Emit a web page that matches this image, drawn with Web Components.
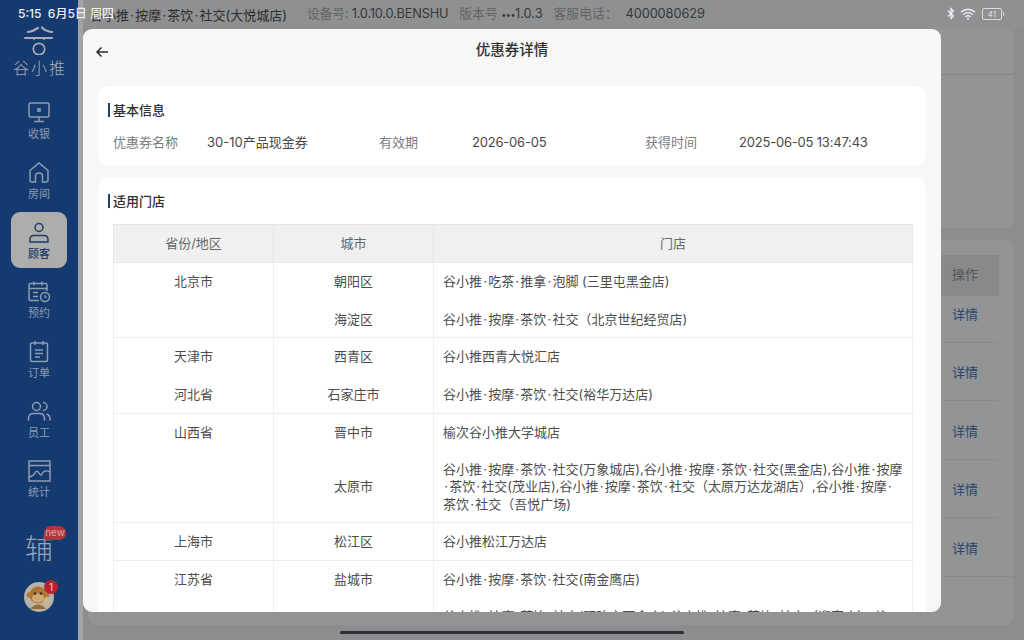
<!DOCTYPE html>
<html lang="zh-CN"><head><meta charset="utf-8"><title>优惠券详情</title>
<style>
html,body{margin:0;height:640px;overflow:hidden;background:#8c8d8f;font-family:"Inter","Noto Sans CJK SC",sans-serif;}
</style></head><body>
<app-shell>
  <app-sidebar slot="side">
    <nav-item label="收银" icon="cash"></nav-item>
    <nav-item label="房间" icon="home"></nav-item>
    <nav-item label="顾客" icon="user" active></nav-item>
    <nav-item label="预约" icon="cal"></nav-item>
    <nav-item label="订单" icon="order"></nav-item>
    <nav-item label="员工" icon="staff"></nav-item>
    <nav-item label="统计" icon="chart"></nav-item>
  </app-sidebar>
  <app-topbar slot="top"></app-topbar>
  <back-page slot="page"></back-page>
  <coupon-modal slot="modal"></coupon-modal>
  <status-bar slot="status"></status-bar>
</app-shell>
<script>
const CJK='"Inter","Noto Sans CJK SC",sans-serif';
const dots=s=>s.replace(/·/g,'<i class="d">·</i>');
const DOT='.d{font-style:normal;margin:0 1.2px}';
function def(name,html){
  customElements.define(name,class extends HTMLElement{
    constructor(){super();this.attachShadow({mode:'open'});}
    connectedCallback(){this.shadowRoot.innerHTML=typeof html==='function'?html(this):html;}
  });
}
def('app-shell',`<style>
:host{display:block;position:relative;width:1024px;height:640px;overflow:hidden;font-family:${CJK}}
.wrap{display:flex;height:640px}
.main{flex:1;min-width:0;display:flex;flex-direction:column;background:#8c8d8f;border-left:5px solid #a2a3a4}
.modal{position:absolute;left:83px;top:29px}
.status{position:absolute;left:0;top:0;right:0}
.pill{position:absolute;left:340px;top:630.5px;width:344px;height:3.5px;border-radius:2px;background:#2e2f33}
</style>
<div class="wrap"><slot name="side"></slot><div class="main"><slot name="top"></slot><slot name="page"></slot></div></div>
<div class="modal"><slot name="modal"></slot></div>
<div class="status"><slot name="status"></slot></div>
<div class="pill"></div>`);

def('app-sidebar',`<style>
:host{display:flex;flex-direction:column;flex:none;width:78px;height:640px;background:#143a6f;box-sizing:border-box;align-items:center;color:#8e9cb2}
.logo{height:91px;flex:none;display:flex;flex-direction:column;align-items:center;justify-content:flex-start;padding-top:25px;box-sizing:border-box}
.logo svg{display:block}
.logo span{font:300 16px/16px "Noto Sans CJK SC",sans-serif;letter-spacing:2px;margin-right:-2px;color:#a8adb5;margin-top:4px}
.nav{display:flex;flex-direction:column;align-self:stretch}
.promo{position:relative;margin-top:17px;height:42px;width:28px;display:flex;align-items:center;justify-content:center;font:300 28px/30px "Noto Sans CJK SC",sans-serif;color:#9aa4b3}
.new{position:absolute;left:19px;top:0;width:22px;height:14px;border-radius:7px 7px 7px 2px;background:#b4343c;color:#d8a7aa;font:10px/13px "Inter",sans-serif;text-align:center}
.ava{position:relative;margin-top:14px;width:30px;height:30px}
.badge{position:absolute;left:20px;top:-2px;width:14px;height:14px;border-radius:50%;background:#b0252d;color:#e9d6d6;font:10px/14px "Inter",sans-serif;text-align:center}
</style>
<div class="logo">
<svg width="36" height="30" viewBox="0 0 36 30" fill="none" stroke="#a8adb5" stroke-width="2.200" stroke-linecap="round"><path d="M7 7q5-.5 10-4M21 2.500q4 4 10 4.500M4 13h27"/><path d="M13 13.500v1M23 13.500v1" stroke-width="1.500"/><circle cx="18" cy="24" r="5.700" stroke-width="1.700"/></svg>
<span>谷小推</span></div>
<div class="nav"><slot></slot></div>
<div class="promo">辅<div class="new">new</div></div>
<div class="ava"><svg width="30" height="30" viewBox="0 0 30 30"><circle cx="15" cy="15" r="15" fill="#b5b2a9"/><circle cx="14" cy="13" r="8.500" fill="#b07434"/><circle cx="5.500" cy="13" r="2.800" fill="#b07434"/><circle cx="22.500" cy="13" r="2.800" fill="#b07434"/><ellipse cx="14" cy="16" rx="6" ry="4.500" fill="#cfa873"/><circle cx="11" cy="11.500" r="1.200" fill="#3a2a1c"/><circle cx="17" cy="11.500" r="1.200" fill="#3a2a1c"/><path d="M6 27q8-9 16 0" fill="#9a6c34"/><path d="M23 14l3 9-4 3-3-8z" fill="#c9b58f"/></svg><div class="badge">1</div></div>`);

const ICONS={
cash:`<rect x="3" y="3" width="20" height="14" rx="1.500"/><path d="M13 17v4M8 21.500h10"/><path d="M13 8v4M11 9h4M11 11h4" stroke-width="1.300"/>`,
home:`<path d="M4 10.500 13 3l9 7.500V20a2 2 0 0 1-2 2h-3.500v-6q0-3-3.500-3t-3.500 3v6H6a2 2 0 0 1-2-2z"/>`,
user:`<circle cx="13" cy="7.500" r="4"/><path d="M4 22v-2.500q0-4 4-4h10q4 0 4 4V22z"/>`,
cal:`<path d="M21 12V6a1.500 1.500 0 0 0-1.500-1.500h-15A1.500 1.500 0 0 0 3 6v14a1.500 1.500 0 0 0 1.500 1.500H13"/><path d="M8 2.500v4M16 2.500v4M3 9.500h18M7 13.500h5M7 17.500h5"/><circle cx="19" cy="18" r="4.500"/><path d="M19 16v2.200h1.800" stroke-width="1.200"/>`,
order:`<rect x="4.500" y="4" width="17" height="18.500" rx="1.500"/><path d="M9 2v4M17 2v4M9 11h8M9 14.500h8M9 18h5"/>`,
staff:`<circle cx="10.500" cy="7.500" r="4"/><path d="M2.500 21.500v-2q0-5 5-5h6q5 0 5 5v2"/><path d="M17 3.500a4 4 0 0 1 0 8M20.500 15q3.500 1 3.500 5v1.500"/>`,
chart:`<rect x="3" y="3" width="21" height="20"/><path d="M3 7.500h21M3 19q4-.5 6-4t4 0 3 1 3-3 5 1"/>`
};
def('nav-item',el=>`<style>
:host{display:flex;height:59.7px;align-items:center;justify-content:center}
.b{width:56px;height:56px;border-radius:9px;display:flex;flex-direction:column;align-items:center;justify-content:center;color:#8e9cb2;box-sizing:border-box;padding-bottom:1px}
.b.on{background:#adaeac;color:#1c3a6c}
svg{display:block;fill:none;stroke:currentColor;stroke-width:1.500}
.t{font:11px/14px "Noto Sans CJK SC",sans-serif;margin-top:1px}
.on .t{font-weight:500}
</style><div class="b ${el.hasAttribute('active')?'on':''}"><svg width="26" height="25" viewBox="0 0 26 25">${ICONS[el.getAttribute('icon')]}</svg><div class="t">${el.getAttribute('label')}</div></div>`);

def('app-topbar',`<style>
:host{display:flex;flex:none;height:29px;box-sizing:border-box;padding-left:7px;align-items:center;font:13px/16px "Inter","Noto Sans CJK SC",sans-serif;color:#2b2c2d;background:#8f9091;white-space:nowrap}
.s{color:#626365;font-size:12.800px;display:flex}.s b{font-weight:400;color:#36383a}
.name{width:217px;flex:none}
.g{margin-right:11px}
.v{letter-spacing:-.2px}
.m{font-size:9px;letter-spacing:-.5px}
.tel{margin-left:8px;letter-spacing:-.1px}
${DOT}
</style><span class="name">${dots('谷小推·按摩·茶饮·社交(大悦城店)')}</span>
<span class="s"><span class="g v">设备号: <b>1.0.10.0.BENSHU</b></span><span class="g">版本号 <b><span class="m">•••</span>1.0.3</b></span><span>客服电话：<b class="tel">4000080629</b></span></span>`);

def('back-page',`<style>
:host{display:flex;flex-direction:column;flex:1;gap:12px;padding:0 11px 15px 5px;box-sizing:border-box;min-height:0;color:#555}
.a{height:199px;flex:none;background:#939495;border-radius:8px;box-sizing:border-box;padding-top:45px}
.a i{display:block;height:1px;background:#848586}
.c{flex:1;background:#939495;border-radius:8px;box-sizing:border-box;padding:15px 14px 0 0;display:flex;flex-direction:column;align-items:stretch}
.h{height:41px;background:#888989;display:flex;align-items:center;justify-content:flex-end;font-size:13px;color:#55575a;padding-bottom:4px;box-sizing:border-box}
span{width:47px}
.r{height:58.400px;border-bottom:1px solid #8a8b8c;box-sizing:border-box;display:flex;align-items:flex-end;justify-content:flex-end;padding-bottom:19px;font-size:13px;line-height:18px;color:#2c4570}
.h + .r{height:47px}
.r.last{margin-right:-14px;padding-right:14px}
</style>
<div class="a"><i></i></div>
<div class="c"><div class="h"><span>操作</span></div>
<div class="r"><span>详情</span></div><div class="r"><span>详情</span></div><div class="r"><span>详情</span></div><div class="r"><span>详情</span></div><div class="r last"><span>详情</span></div></div>`);

def('info-card',el=>`<style>
:host{display:block;background:#fff;border-radius:10px;padding:14.500px 15px 0 15px;box-sizing:border-box;position:relative}
h2{margin:0;font:500 13px/18px "Noto Sans CJK SC",sans-serif;color:#2f3032;position:relative}
h2::before{content:"";position:absolute;left:-5px;top:2px;width:2px;height:14px;background:#20406f}
</style><h2>${el.getAttribute('heading')}</h2><slot></slot>`);

def('info-grid',`<style>
:host{display:grid;grid-template-columns:94px 172px 93px 173px 94px 1fr;margin-top:14px;font:13px/18px "Inter","Noto Sans CJK SC",sans-serif;color:#47484a;height:19px}
.l{color:#7b7c7e}.n{letter-spacing:-.2px}
</style><span class="l">优惠券名称</span><span>30-10产品现金券</span><span class="l">有效期</span><span class="n">2026-06-05</span><span class="l">获得时间</span><span class="n">2025-06-05 13:47:43</span>`);

const rows=[
['北京市','朝阳区','谷小推·吃茶·推拿·泡脚 (三里屯黑金店)'],
['','海淀区','谷小推·按摩·茶饮·社交（北京世纪经贸店)'],
['天津市','西青区','谷小推西青大悦汇店'],
['河北省','石家庄市','谷小推·按摩·茶饮·社交(裕华万达店)'],
['山西省','晋中市','榆次谷小推大学城店'],
['','太原市','谷小推·按摩·茶饮·社交(万象城店),谷小推·按摩·茶饮·社交(黑金店),谷小推·按摩<br>·茶饮·社交(茂业店),谷小推·按摩·茶饮·社交（太原万达龙湖店）,谷小推·按摩·<br>茶饮·社交（吾悦广场)'],
['上海市','松江区','谷小推松江万达店'],
['江苏省','盐城市','谷小推·按摩·茶饮·社交(南金鹰店)'],
['','','谷小推·按摩·茶饮·社交(盱眙宝丽金店),谷小推·按摩·茶饮·社交（迎宾店）,谷']];
def('store-table',`<style>
:host{display:block;margin-top:14.500px;font:13px/17.500px "Inter","Noto Sans CJK SC",sans-serif;color:#4c4d4f}
table{border-collapse:collapse;table-layout:fixed;width:800px;border:1px solid #ececec}
th{height:37px;padding:0;background:#f0f0f0;border:1px solid #e6e6e6;font-weight:400;color:#666769;font-size:13px}
td{padding:10px;vertical-align:top;border-left:1px solid #efefef;border-right:1px solid #efefef;text-align:center;white-space:nowrap}
td:last-child{text-align:left;padding-left:9px}
tr.sep td{border-bottom:1px solid #ececec;padding-bottom:9px}
tr.tall td{padding-bottom:10px}
tr.mid td{padding-top:9px}
tr.mid td.c{vertical-align:middle}
${DOT}
</style><table><colgroup><col style="width:160px"><col style="width:160px"><col></colgroup>
<thead><tr><th>省份/地区</th><th>城市</th><th>门店</th></tr></thead><tbody>
${rows.map((r,i)=>`<tr class="${(i==1||i==3||i==5||i==6)?'sep':''} ${i==3?'tall':''} ${i==5?'mid':''}"><td>${r[0]}</td><td class="c">${r[1]}</td><td>${dots(r[2])}</td></tr>`).join('')}
</tbody></table>`);

def('coupon-modal',`<style>
:host{display:flex;flex-direction:column;width:858px;height:583px;background:#f7f7f7;border-radius:9px;overflow:hidden;box-sizing:border-box;padding:0 15px}
.head{flex:none;height:57px;position:relative;margin:0;text-align:center;font:500 14.500px/40px "Noto Sans CJK SC",sans-serif;color:#2e2f31}
.back{position:absolute;left:-3px;top:17px}
info-card{flex:none}
.a{height:79px;margin-bottom:12px}
.b{flex:1;border-radius:10px 10px 0 0}
</style>
<div class="head"><svg class="back" width="14" height="12" viewBox="0 0 14 12" fill="none" stroke="#2a2a2c" stroke-width="1.500"><path d="M13 6H2M6.500 1.500 2 6l4.500 4.500"/></svg>优惠券详情</div>
<info-card class="a" heading="基本信息"><info-grid></info-grid></info-card>
<info-card class="b" heading="适用门店"><store-table></store-table></info-card>`);

def('status-bar',`<style>
:host{display:flex;height:27px;align-items:center;justify-content:space-between;padding:0 22px 0 18px;box-sizing:border-box;color:#eef0f4;font:500 12px/16px "Inter","Noto Sans CJK SC",sans-serif}
span{white-space:pre}
.r{display:flex;align-items:center;gap:5px}
svg{display:block}
.bat{width:18px;height:10px;border:1px solid #d9dadb;border-radius:2px;font:8px/10px "Inter",sans-serif;text-align:center;color:#dfe0e1;position:relative;margin-left:1px}
.bat::after{content:"";position:absolute;right:-3px;top:3px;width:1.500px;height:4px;background:#d9dadb}
</style><span>5:15  6月5日 周四</span><div class="r">
<svg width="8" height="13" viewBox="0 0 8 13" fill="none" stroke="#eef0f4" stroke-width="1.200"><path d="M1 3.500 6.500 9 4 11.500v-10L6.500 4 1 9.500"/></svg>
<svg width="16" height="12" viewBox="0 0 16 12" fill="none" stroke="#eef0f4" stroke-width="1.400"><path d="M1 4q7-5.500 14 0M3.200 6.500q4.800-3.800 9.600 0M5.500 8.800q2.500-2 5 0"/><circle cx="8" cy="10.500" r="1" fill="#eef0f4" stroke="none"/></svg>
<div class="bat">41</div></div>`);
</script>
</body></html>
